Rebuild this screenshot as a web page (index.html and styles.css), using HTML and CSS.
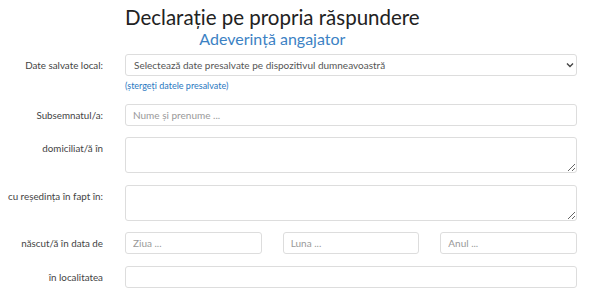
FILE: index.html
```html
<!DOCTYPE html>
<html lang="ro">
<head>
    <meta charset="UTF-8">
    <meta name="viewport" content="width=device-width, initial-scale=1.0">
    <title>Declarație pe propria răspundere</title>
    <link rel="stylesheet" href="styles.css">
</head>
<body>
    <div class="page">
        <div class="form-row header-row">
            <div></div>
            <div class="heading">
                <h1>Declarație pe propria răspundere</h1>
                <div class="subtitle">Adeverință angajator</div>
            </div>
        </div>

        <div class="form-row">
            <label for="saved">Date salvate local:</label>
            <div>
                <div class="select-wrap">
                    <select id="saved">
                        <option>Selectează date presalvate pe dispozitivul dumneavoastră</option>
                    </select>
                    <svg class="chevron" width="8" height="6" viewBox="0 0 8 6">
                        <path d="M1 1.5 L4 4.5 L7 1.5" fill="none" stroke="#444" stroke-width="1.4"/>
                    </svg>
                </div>
                <a href="#" class="clear-link">(ștergeți datele presalvate)</a>
            </div>
        </div>

        <div class="form-row">
            <label for="name">Subsemnatul/a:</label>
            <input type="text" id="name" placeholder="Nume și prenume ...">
        </div>

        <div class="form-row">
            <label for="home">domiciliat/ă în</label>
            <textarea id="home"></textarea>
        </div>

        <div class="form-row">
            <label for="residence">cu reședința în fapt în:</label>
            <textarea id="residence"></textarea>
        </div>

        <div class="form-row">
            <label for="day">născut/ă în data de</label>
            <div class="date-group">
                <input type="text" id="day" placeholder="Ziua ...">
                <input type="text" id="month" placeholder="Luna ...">
                <input type="text" id="year" placeholder="Anul ...">
            </div>
        </div>

        <div class="form-row">
            <label for="city">în localitatea</label>
            <input type="text" id="city">
        </div>
    </div>
</body>
</html>
```

FILE: styles.css
```css
body {
    margin: 0;
    font-family: Lato, "Open Sans", sans-serif;
    color: #333;
    background: #fff;
}
.page {
    padding-top: 5px;
}
.form-row {
    display: grid;
    grid-template-columns: 103px 452px;
    column-gap: 22px;
    margin-bottom: 11.5px;
}
.header-row {
    margin-bottom: 5px;
}
.heading {
    display: inline-block;
    justify-self: start;
    text-align: center;
}
h1 {
    margin: 0;
    font-size: 20.5px;
    font-weight: 400;
    line-height: 24px;
    color: #222;
}
.subtitle {
    font-size: 16px;
    line-height: 20px;
    color: #3c82c4;
}
label {
    text-align: right;
    font-size: 9.8px;
    line-height: 13px;
    padding-top: 5px;
    color: #444;
    white-space: nowrap;
}
input,
select,
textarea {
    box-sizing: border-box;
    width: 100%;
    border: 1px solid #ddd;
    border-radius: 3px;
    font-family: inherit;
    font-size: 10px;
    color: #555;
    background: #fff;
    padding: 0 7px;
    margin: 0;
}
input,
select {
    height: 22px;
}
textarea {
    height: 36px;
    padding: 4px 7px;
    display: block;
}
::placeholder {
    color: #999;
}
.select-wrap {
    position: relative;
}
select {
    appearance: none;
    padding-left: 8px;
    display: block;
}
.chevron {
    position: absolute;
    right: 3px;
    top: 8px;
}
.clear-link {
    display: block;
    margin-top: 4px;
    font-size: 9px;
    line-height: 12px;
    color: #2a78bf;
    text-decoration: none;
}
.date-group {
    display: grid;
    grid-template-columns: 1fr 1fr 1fr;
    column-gap: 21px;
}
```
